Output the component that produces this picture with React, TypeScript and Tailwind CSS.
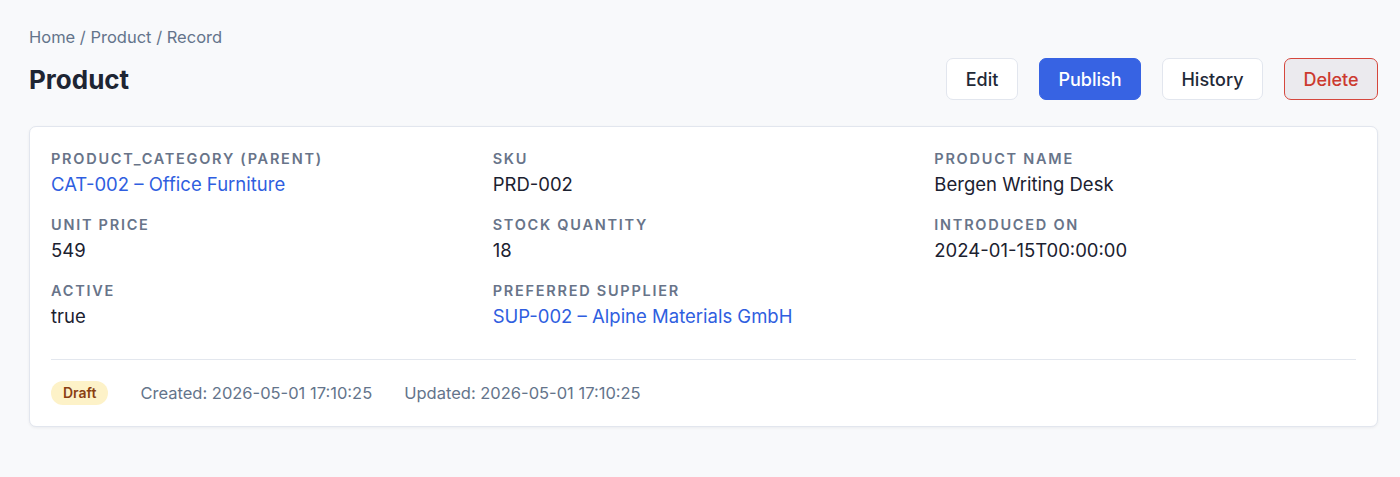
export default function App() {
  const fields = [
    { label: "PRODUCT_CATEGORY (PARENT)", value: "CAT-002 – Office Furniture", link: true },
    { label: "SKU", value: "PRD-002" },
    { label: "PRODUCT NAME", value: "Bergen Writing Desk" },
    { label: "UNIT PRICE", value: "549" },
    { label: "STOCK QUANTITY", value: "18" },
    { label: "INTRODUCED ON", value: "2024-01-15T00:00:00" },
    { label: "ACTIVE", value: "true" },
    { label: "PREFERRED SUPPLIER", value: "SUP-002 – Alpine Materials GmbH", link: true },
  ];

  return (
    <div className="min-h-[477px] w-full bg-[#f8f9fb] pl-[29px] pr-[22px] pt-[26px] font-['Inter',sans-serif]">
      <nav className="text-[16.5px] leading-[22px] text-[#64748b]">Home / Product / Record</nav>

      <div className="mt-[10px] flex items-center justify-between">
        <h1 className="pt-[2px] text-[26px] font-bold leading-[40px] text-[#1e2533]">Product</h1>
        <div className="flex gap-[21px]">
          <button className="h-[42px] w-[72px] rounded-[7px] border border-[#e2e6ee] bg-white text-[18px] font-medium text-[#1f2937]">
            Edit
          </button>
          <button className="h-[42px] w-[102px] rounded-[7px] border border-[#3763e3] bg-[#3763e3] text-[18px] font-medium text-white">
            Publish
          </button>
          <button className="h-[42px] w-[101px] rounded-[7px] border border-[#e2e6ee] bg-white text-[18px] font-medium text-[#1f2937]">
            History
          </button>
          <button className="h-[42px] w-[94px] rounded-[7px] border border-[#d5473d] bg-[#ebeaee] text-[18px] font-medium text-[#cc3a30]">
            Delete
          </button>
        </div>
      </div>

      <div className="mt-[26px] rounded-[7px] border border-[#e2e6ee] bg-white px-[21px] pb-[20px] pt-[21px] shadow-[0_1px_3px_rgba(15,23,42,0.06)]">
        <div className="grid grid-cols-3 gap-x-5 gap-y-[17px]">
          {fields.map((f) => (
            <div key={f.label}>
              <div className="text-[14.5px] font-semibold leading-[22px] tracking-[0.12em] text-[#687489]">{f.label}</div>
              <div
                className={`mt-[1px] text-[18.5px] leading-[26px] ${f.link ? "text-[#2f5ee0]" : "text-[#1b2130]"}`}
              >
                {f.value}
              </div>
            </div>
          ))}
        </div>

        <div className="mt-[30px] border-t border-[#e3e7ee] pt-[21px]">
          <div className="flex items-center text-[16.5px] text-[#64748b]">
            <span className="rounded-full bg-[#fdf2c8] px-[12px] py-[3px] text-[14px] font-semibold leading-[18px] text-[#8a3f12]">
              Draft
            </span>
            <span className="ml-[32px]">Created: 2026-05-01 17:10:25</span>
            <span className="ml-[32px]">Updated: 2026-05-01 17:10:25</span>
          </div>
        </div>
      </div>
    </div>
  );
}
